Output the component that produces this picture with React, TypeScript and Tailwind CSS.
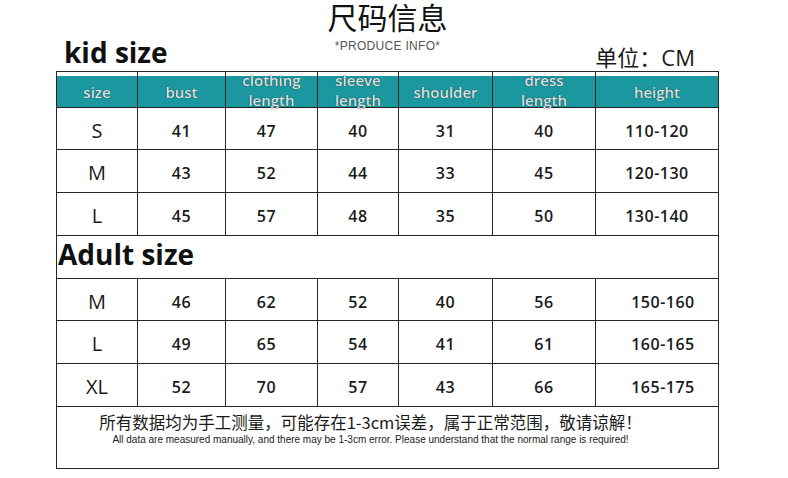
const heads = [
  { label: ["size"] },
  { label: ["bust"] },
  { label: ["clothing", "length"] },
  { label: ["sleeve", "length"] },
  { label: ["shoulder"] },
  { label: ["dress", "length"] },
  { label: ["height"] },
];

const kidRows = [
  ["S", "41", "47", "40", "31", "40", "110-120"],
  ["M", "43", "52", "44", "33", "45", "120-130"],
  ["L", "45", "57", "48", "35", "50", "130-140"],
];

const adultRows = [
  ["M", "46", "62", "52", "40", "56", "150-160"],
  ["L", "49", "65", "54", "41", "61", "160-165"],
  ["XL", "52", "70", "57", "43", "66", "165-175"],
];

// small per-column nudges, the numbers in the picture are not all centered
const kidShift = ["", "", "pr-[10px]", "", "", "", ""];
const adultShift = ["", "", "pr-[10px]", "", "", "", "pl-[12px]"];

function DataRow({ row, shift }: { row: string[]; shift: string[] }) {
  return (
    <>
      {row.map((v, i) => (
        <div
          key={i}
          className={
            "flex items-center justify-center border-r border-b border-[#262626] pt-[4px] text-[#1a1a1a] " +
            (i === 0 ? "text-[20px] font-normal " : "text-[16px] font-semibold tracking-[0.5px] ") +
            shift[i]
          }
        >
          {v}
        </div>
      ))}
    </>
  );
}

export default function App() {
  return (
    <div className="w-[788px] h-[478px] bg-white overflow-hidden font-['Open_Sans','Noto_Sans_CJK_SC',sans-serif] text-[#111]">
      <div className="ml-[56px] w-[663px]">
        <div className="h-[36px] pt-[1px] text-center text-[30px] leading-[30px] font-['Noto_Sans_CJK_SC',sans-serif] text-[#111]">
          尺码信息
        </div>
        <div className="h-[35px] grid grid-cols-[1fr_auto_1fr] items-start">
          <div className="pl-[8px] pt-[2px] text-[28px] leading-[28px] font-bold">kid size</div>
          <div className="pt-[4px] text-[12px] leading-[12px] font-['Liberation_Sans',sans-serif] text-[#555] tracking-[0.3px]">
            *PRODUCE INFO*
          </div>
          <div className="justify-self-end pr-[24px] pt-[10px] text-[22px] leading-[22px] font-normal text-[#1a1a1a]">
            单位：CM
          </div>
        </div>

        <div className="grid grid-cols-[81px_88px_92px_81px_94px_103px_123px] grid-rows-[36px_42px_43px_43px_43px_42px_43px_43px_62px] border-l border-t border-[#262626]">
          {heads.map((h, i) => (
            <div
              key={i}
              className={
                "flex flex-col items-center justify-center border-r border-b border-[#262626] bg-[linear-gradient(#ffffff_4px,#1b979f_4px)] text-[15px] leading-[20px] font-semibold text-[#dce2e2] [text-shadow:0_0_1px_rgba(0,0,0,0.85)] " +
                (h.label.length === 1 ? "pt-[5px]" : "")
              }
            >
              {h.label.map((t) => (
                <span key={t}>{t}</span>
              ))}
            </div>
          ))}

          {kidRows.map((r, i) => (
            <DataRow key={"k" + i} row={r} shift={kidShift} />
          ))}

          <div className="col-span-7 flex items-center border-r border-b border-[#262626] pl-[1px] pb-[6px] text-[28px] leading-[28px] font-bold text-[#111]">
            Adult size
          </div>

          {adultRows.map((r, i) => (
            <DataRow key={"a" + i} row={r} shift={adultShift} />
          ))}

          <div className="col-span-7 flex flex-col items-center border-r border-b border-[#262626] pt-[5px] pr-[34px]">
            <div className="text-[16.5px] leading-[20px] font-['Noto_Sans_CJK_SC',sans-serif] text-[#1a1a1a]">
              所有数据均为手工测量，可能存在1-3cm误差，属于正常范围，敬请谅解！
            </div>
            <div className="mt-[2px] text-[10px] leading-[12px] font-['Liberation_Sans',sans-serif] text-[#222]">
              All data are measured manually, and there may be 1-3cm error. Please understand that the normal range is required!
            </div>
          </div>
        </div>
      </div>
    </div>
  );
}
